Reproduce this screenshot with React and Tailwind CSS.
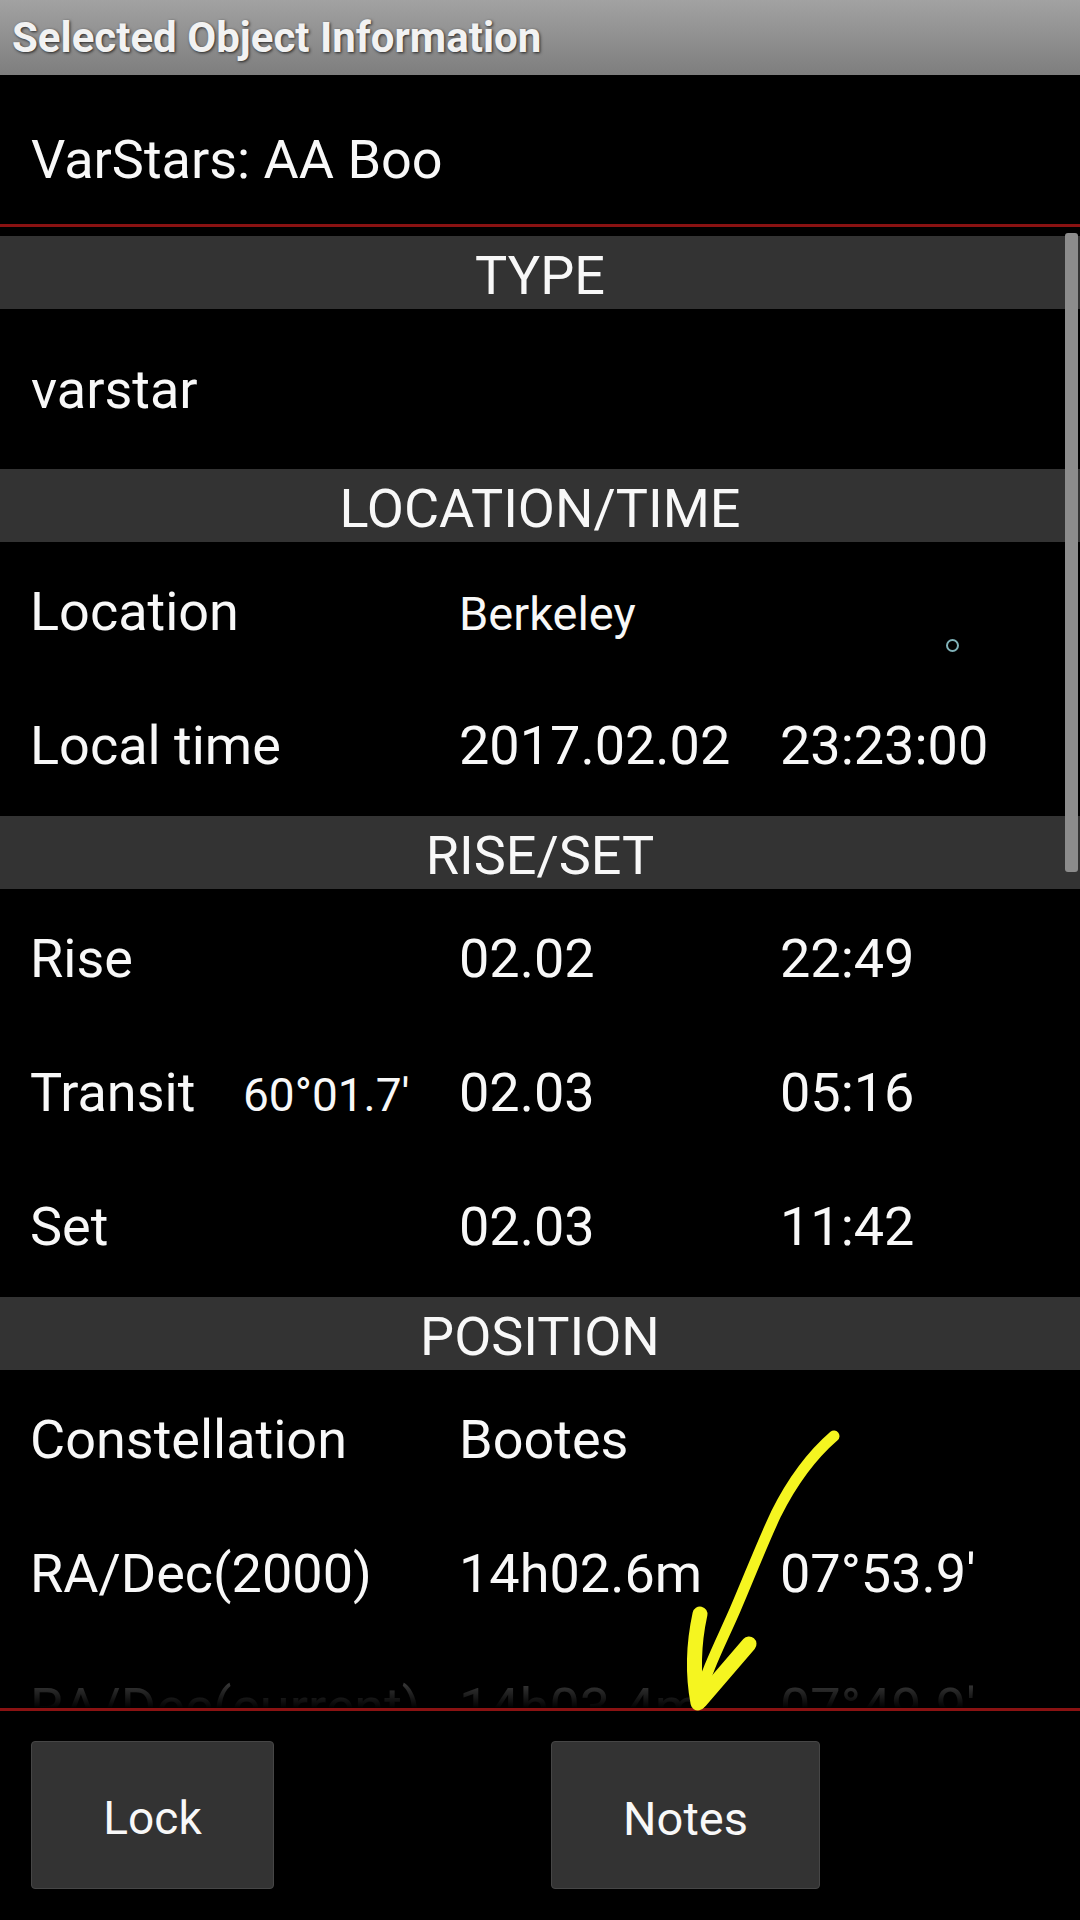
import React from "react";

const font = { fontFamily: "Roboto, 'Noto Sans', 'Liberation Sans', sans-serif" };

function Band({ children }) {
  return (
    <div className="h-[73px] bg-[#333333] flex items-center justify-center pt-[6px] text-[54px] leading-none text-[#f8f8f8]">
      {children}
    </div>
  );
}

function Row({ label, angle, v1, v2, small }) {
  return (
    <div className="h-[134px] flex items-center pt-[2px]">
      <div className="w-full grid grid-cols-[429px_321px_1fr] items-baseline pl-[30px] leading-none text-[#f8f8f8]">
        <div className="flex items-baseline">
          <span className={angle ? "w-[213px] text-[54px]" : "text-[54px]"}>{label}</span>
          {angle && <span className="text-[46px]">{angle}</span>}
        </div>
        <span className={small ? "text-[47px]" : "text-[54px]"}>{v1}</span>
        <span className="text-[54px]">{v2}</span>
      </div>
    </div>
  );
}

export default function App() {
  return (
    <div className="relative w-[1080px] h-[1920px] bg-black overflow-hidden" style={font}>
      {/* Title bar */}
      <div className="h-[75px] bg-gradient-to-b from-[#a2a2a2] to-[#7e7e7e] flex items-center pl-[12px]">
        <span className="text-[42px] font-bold leading-none text-[#f2f2f2] [text-shadow:1px_1px_3px_rgba(0,0,0,0.75)]">
          Selected Object Information
        </span>
      </div>

      {/* Object name */}
      <div className="h-[149px] flex items-center pt-[20px] pl-[31px] text-[54px] leading-none text-[#f8f8f8]">
        VarStars: AA Boo
      </div>
      <div className="h-[3px] bg-[#8a1212]" />

      {/* Scroll area */}
      <div className="relative h-[1481px] overflow-hidden">
        <div className="pt-[9px]">
          <Band>TYPE</Band>
          <div className="h-[160px] flex items-center pt-[2px] pl-[31px] text-[54px] leading-none text-[#f8f8f8]">
            varstar
          </div>
          <Band>LOCATION/TIME</Band>
          <div className="pt-[2px] pb-[4px]">
            <Row label="Location" v1="Berkeley" v2="" small />
            <Row label="Local time" v1="2017.02.02" v2="23:23:00" />
          </div>
          <Band>RISE/SET</Band>
          <div className="pt-[2px] pb-[4px]">
            <Row label="Rise" v1="02.02" v2="22:49" />
            <Row label="Transit" angle="60°01.7'" v1="02.03" v2="05:16" />
            <Row label="Set" v1="02.03" v2="11:42" />
          </div>
          <Band>POSITION</Band>
          <div className="pt-[2px]">
            <Row label="Constellation" v1="Bootes" v2="" />
            <Row label="RA/Dec(2000)" v1="14h02.6m" v2="07°53.9'" />
            <Row label="RA/Dec(current)" v1="14h03.4m" v2="07°49.9'" />
          </div>
        </div>
        {/* fading edge */}
        <div className="absolute left-0 right-0 bottom-0 h-[110px] bg-gradient-to-b from-transparent to-black" />
        {/* scrollbar */}
        <div className="absolute right-[2px] top-[6px] w-[13px] h-[639px] rounded-[3px] bg-[#8c8c8c]" />
        {/* small ring */}
        <div className="absolute left-[946px] top-[412px] w-[13px] h-[13px] rounded-full border-2 border-[#80b2b8]" />
      </div>
      <div className="h-[3px] bg-[#8a1212]" />

      {/* Buttons */}
      <div className="flex pt-[30px] pl-[31px]">
        <div className="w-[243px] h-[148px] rounded-[4px] bg-[#333333] border border-[#464646] shadow-[0_2px_2px_rgba(0,0,0,0.6)] flex items-center justify-center pt-[6px] text-[46px] leading-none text-[#f8f8f8]">
          Lock
        </div>
        <div className="ml-[277px] w-[269px] h-[148px] rounded-[4px] bg-[#333333] border border-[#464646] shadow-[0_2px_2px_rgba(0,0,0,0.6)] flex items-center justify-center pt-[6px] text-[47px] leading-none text-[#f8f8f8]">
          Notes
        </div>
      </div>

      {/* Yellow hand-drawn arrow annotation */}
      <svg
        className="absolute left-0 top-0 pointer-events-none"
        width="1080"
        height="1920"
        viewBox="0 0 1080 1920"
      >
        <path
          d="M834 1436 C812 1455 791 1484 776 1514 C761 1546 748 1580 735 1610 C722 1640 706 1670 698 1702"
          fill="none"
          stroke="#f5f520"
          strokeWidth="11"
          strokeLinecap="round"
        />
        <path
          d="M700 1614 Q690 1660 698 1703"
          fill="none"
          stroke="#f5f520"
          strokeWidth="15"
          strokeLinecap="round"
        />
        <path
          d="M749 1644 L700 1701"
          fill="none"
          stroke="#f5f520"
          strokeWidth="15"
          strokeLinecap="round"
        />
      </svg>
    </div>
  );
}
